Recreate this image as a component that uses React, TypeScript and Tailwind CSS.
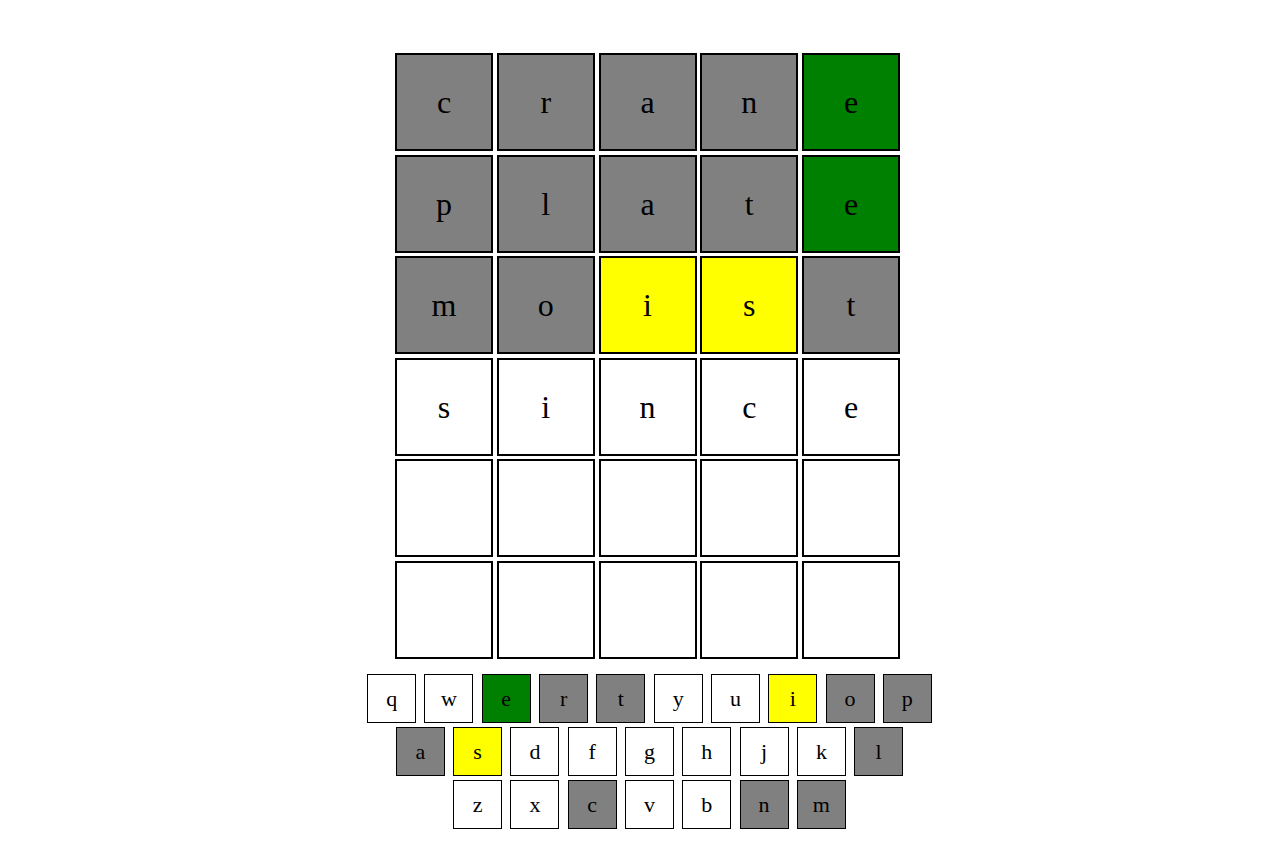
import React from "react";

type C = "g" | "G" | "y" | "w";

const rows: { l: string; c: C }[][] = [
  [..."crane"].map((l, i) => ({ l, c: (i === 4 ? "G" : "g") as C })),
  [..."plate"].map((l, i) => ({ l, c: (i === 4 ? "G" : "g") as C })),
  [..."moist"].map((l, i) => ({ l, c: (i === 2 || i === 3 ? "y" : "g") as C })),
  [..."since"].map((l) => ({ l, c: "w" as C })),
  [..."     "].map((l) => ({ l, c: "w" as C })),
  [..."     "].map((l) => ({ l, c: "w" as C })),
];

const bg: Record<C, string> = {
  g: "bg-[#808080]",
  G: "bg-[#008000]",
  y: "bg-[#ffff00]",
  w: "bg-white",
};

const keyColors: Record<string, C> = {
  e: "G",
  r: "g",
  t: "g",
  i: "y",
  o: "g",
  p: "g",
  a: "g",
  s: "y",
  l: "g",
  c: "g",
  n: "g",
  m: "g",
};

const kb = ["qwertyuiop", "asdfghjkl", "zxcvbnm"];

export default function App() {
  return (
    <div
      className="w-[1284px] h-[851px] bg-white flex flex-col items-center pt-[53px] pl-[15px]"
      style={{ fontFamily: '"Liberation Serif", "Times New Roman", serif' }}
    >
      <div className="flex flex-col gap-y-[3.6px] mr-[4px]">
        {rows.map((r, ri) => (
          <div key={ri} className="flex gap-x-[3.75px]">
            {r.map((t, ti) => (
              <div
                key={ti}
                className={`w-[98px] h-[98px] border-2 border-black flex items-center justify-center text-[32px] text-black ${bg[t.c]}`}
              >
                {t.l.trim()}
              </div>
            ))}
          </div>
        ))}
      </div>
      <div className="flex flex-col items-center gap-y-[4px] mt-[15px]">
        {kb.map((row, ri) => (
          <div key={ri} className="flex gap-x-[8.3px]">
            {[...row].map((k) => (
              <div
                key={k}
                className={`w-[49px] h-[49px] border border-black flex items-center justify-center text-[22px] text-black ${bg[keyColors[k] ?? "w"]}`}
              >
                {k}
              </div>
            ))}
          </div>
        ))}
      </div>
    </div>
  );
}
